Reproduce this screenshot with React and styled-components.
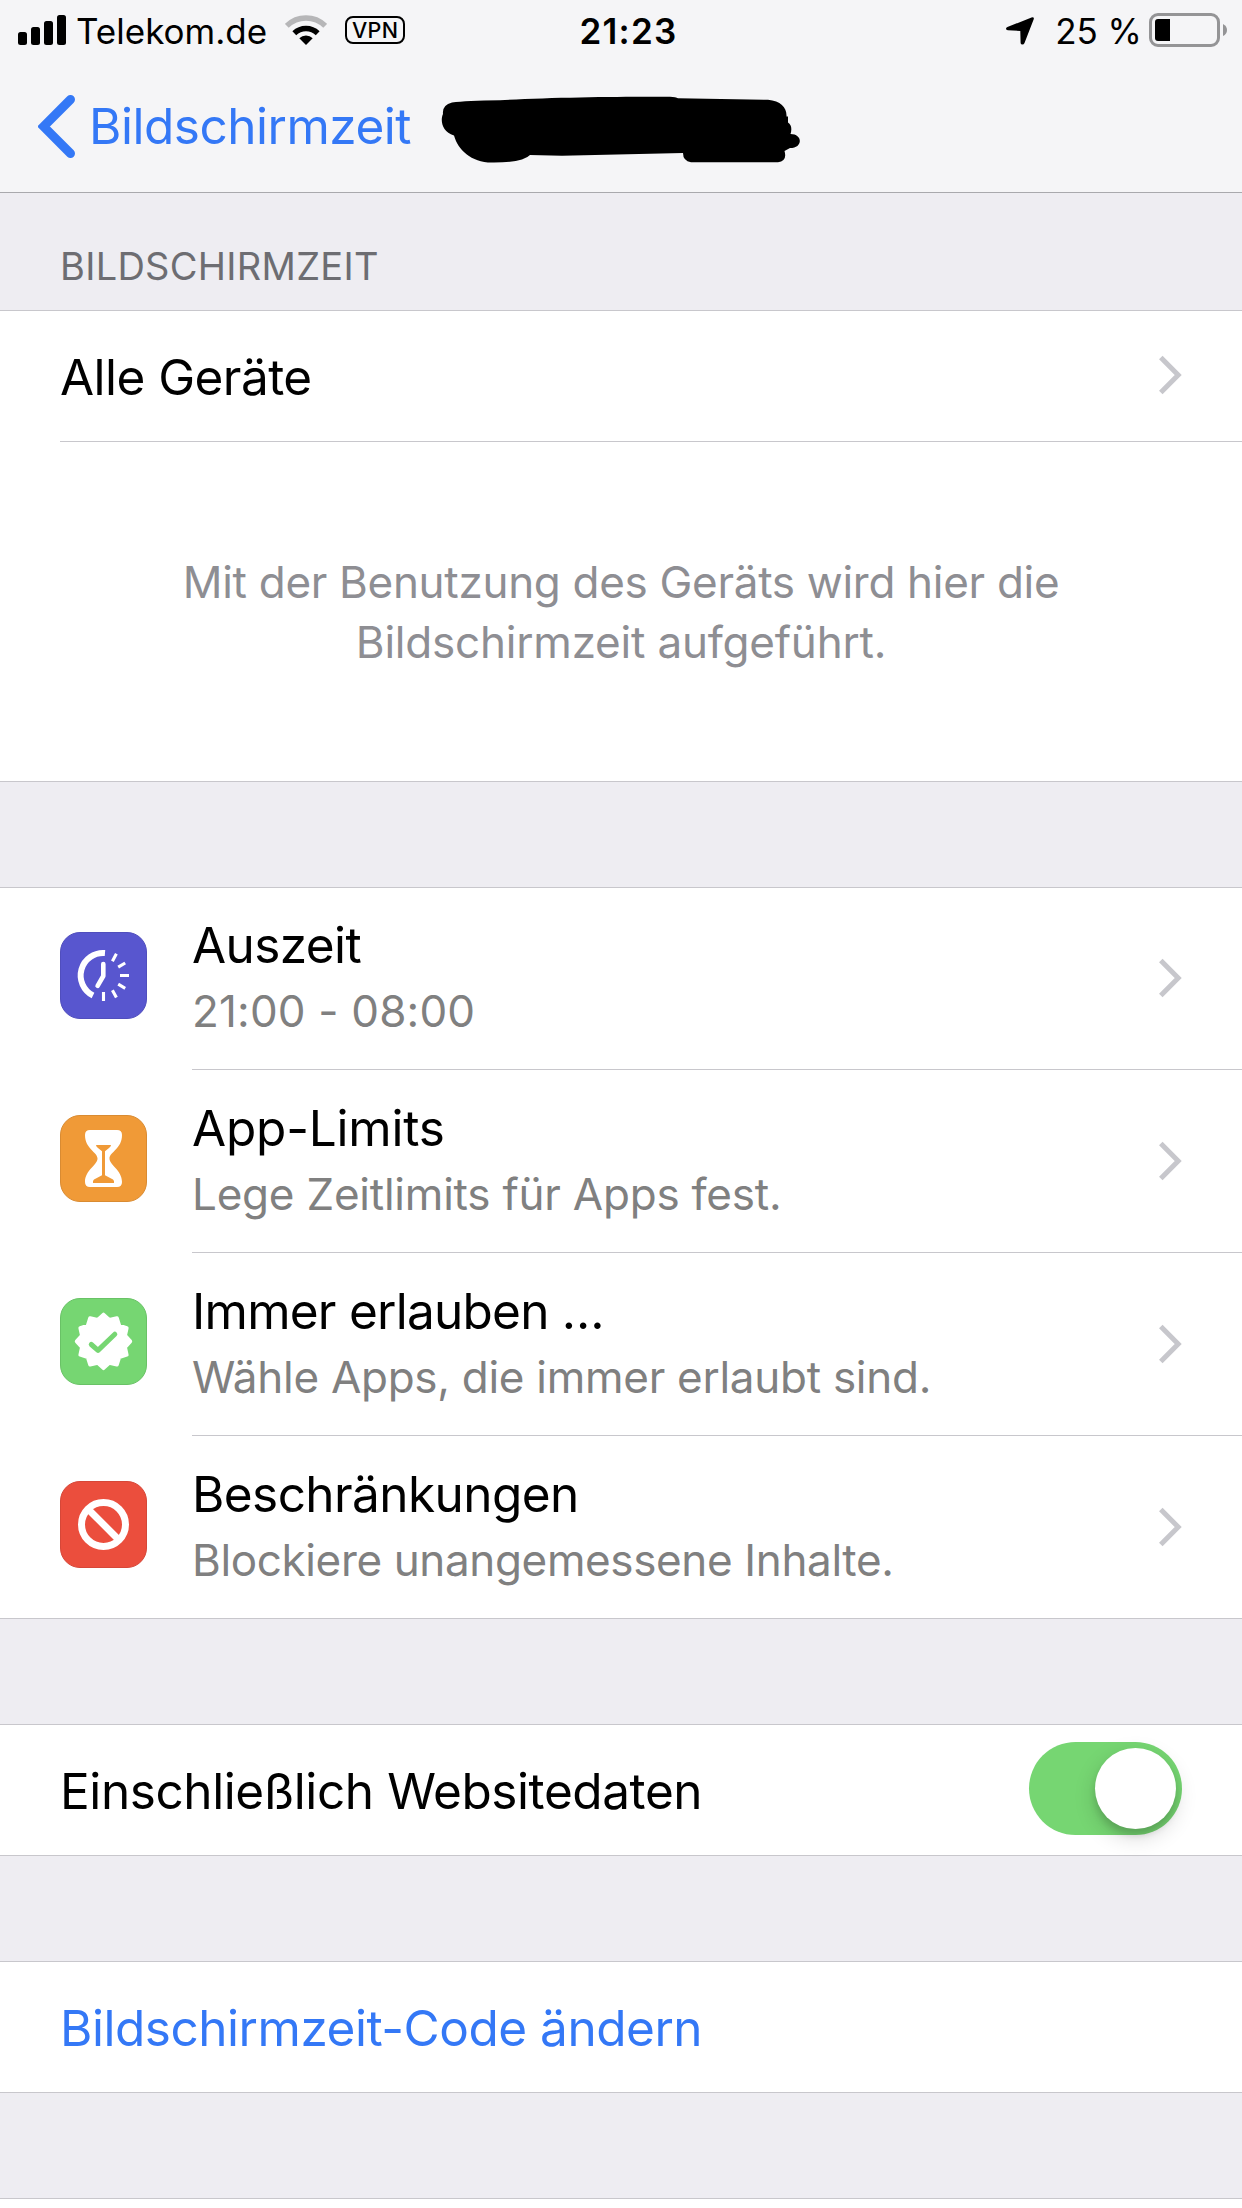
import React from "react";
import styled, { createGlobalStyle } from "styled-components";

const Global = createGlobalStyle`
  * { box-sizing: border-box; }
  body { margin: 0; background: #eeedf2; font-family: Inter, "Liberation Sans", sans-serif; }
`;

const Page = styled.div`
  width: 1242px;
  height: 2208px;
  overflow: hidden;
  display: flex;
  flex-direction: column;
  background: #eeedf2;
`;

const Header = styled.header`
  height: 193px;
  flex: none;
  background: #f5f5f7;
  border-bottom: 1px solid #a9a9ad;
`;

const StatusBar = styled.div`
  height: 60px;
  display: grid;
  grid-template-columns: 1fr auto 1fr;
  padding: 0 15px 0 18px;
`;

const StatusGroup = styled.div`
  display: flex;
  align-items: flex-start;
  justify-content: ${(p) => (p.$end ? "flex-end" : "flex-start")};
`;

const Label = styled.span`
  display: block;
  white-space: nowrap;
  font-size: ${(p) => p.$size}px;
  line-height: ${(p) => p.$line || 60}px;
  font-weight: ${(p) => p.$weight || 400};
  letter-spacing: ${(p) => p.$track || 0}px;
  color: ${(p) => p.$color || "#000"};
  margin: ${(p) => p.$margin || 0};
`;

const Glyph = styled.svg`
  display: block;
  flex: none;
  margin: ${(p) => p.$margin || 0};
`;

const VpnBadge = styled.div`
  width: 60px;
  height: 28px;
  margin: 16px 0 0 18px;
  border: 2px solid #000;
  border-radius: 8px;
  display: flex;
  align-items: center;
  justify-content: center;
`;

const NavBar = styled.nav`
  height: 132px;
  display: flex;
  align-items: flex-start;
  padding-left: 38px;
`;

const SectionTitle = styled.div`
  height: 117px;
  flex: none;
  padding: 42px 0 0 60px;
`;

const Group = styled.section`
  flex: none;
  background: #fff;
  border-top: 1px solid #c8c7cc;
  border-bottom: 1px solid #c8c7cc;
  margin-bottom: ${(p) => p.$gap || 0}px;
`;

const FeatureGroup = styled(Group)`
  border-top: 0;
  box-shadow: inset 0 1px #c8c7cc;
`;

const Row = styled.div`
  height: 130px;
  display: flex;
  align-items: center;
  justify-content: space-between;
  padding: 0 60px;
`;

const Divider = styled.div`
  height: 1px;
  margin-left: ${(p) => p.$inset}px;
  background: #c8c7cc;
`;

const Empty = styled.div`
  height: 339px;
  padding-top: 110px;
  display: flex;
  flex-direction: column;
  align-items: center;
`;

const FeatureRow = styled.div`
  height: 182px;
  display: flex;
  align-items: flex-start;
  padding: 0 60px;
`;

const Texts = styled.div`
  flex: 1;
  padding: 28px 0 0 45px;
`;

const Switch = styled.div`
  width: 153px;
  height: 93px;
  border-radius: 47px;
  background: #76d672;
  display: flex;
  justify-content: flex-end;
  padding: 6px;
  margin-top: -3px;
`;

const Knob = styled.div`
  width: 81px;
  height: 81px;
  border-radius: 50%;
  background: #fff;
  box-shadow: 0 8px 22px rgba(0, 0, 0, 0.16), 0 6px 7px rgba(0, 0, 0, 0.13);
`;

const LastSection = styled.div`
  flex: 1;
  margin-top: 105px;
  background: #fff;
  border-top: 1px solid #c8c7cc;
`;

function Chevron({ margin }) {
  return (
    <Glyph width="25" height="40" viewBox="0 0 25 40" $margin={margin}>
      <path d="M2.8 2.5 20.2 20 2.8 37.5" fill="none" stroke="#c7c7cc" strokeWidth="5" />
    </Glyph>
  );
}

function Tile({ fill, edge, children }) {
  return (
    <Glyph width="87" height="87" viewBox="0 0 87 87" $margin="45px 0 0 0">
      <rect x="0.5" y="0.5" width="86" height="86" rx="19.5" fill={fill} stroke={edge} />
      {children}
    </Glyph>
  );
}

const DowntimeIcon = () => (
  <Tile fill="#5856cf" edge="#504ebd">
    <path d="M45 21A22.500 22.500 0 0 0 33 63.500" fill="none" stroke="#fff" strokeWidth="6" />
    <path d="M43.3 32V44L37.6 53.8" fill="none" stroke="#fff" strokeWidth="4.6" strokeLinecap="round" strokeLinejoin="round" />
    <path d="M52.4 29.2 56.4 21.8M58.2 35.2 65.2 31M60 43.5H69M58.2 52.2 65.2 56.4M52.4 58.2 56.4 65.6M43.5 60V69" stroke="#fff" strokeWidth="3.1" />
  </Tile>
);

const HourglassIcon = () => (
  <Tile fill="#f09a37" edge="#d98b32">
    <path
      d="M30 15H57Q62 15 62 20C62 34 49.500 37 49.500 43.500S62 55 62 67Q62 72 57 72H30Q25 72 25 67C25 55 37.500 50 37.500 43.500S25 34 25 20Q25 15 30 15Z"
      fill="#fff"
    />
    <path d="M36 30H51Q51 31.500 49 33L45 36.300V60.300L53 64.500Q54.500 65.500 54 68H33Q32.500 65.500 34 64.500L42 60.300V36.300L38 33Q36 31.500 36 30Z" fill="#f09a37" />
  </Tile>
);

const SEAL = Array.from({ length: 24 }, (_, i) => {
  const a = (i * Math.PI) / 12 - Math.PI / 2;
  const r = i % 2 ? 22.3 : 26.8;
  return `${(43.5 + r * Math.cos(a)).toFixed(2)},${(43.4 + r * Math.sin(a)).toFixed(2)}`;
}).join(" ");

const SealIcon = () => (
  <Tile fill="#76d672" edge="#69c266">
    <polygon points={SEAL} fill="#fff" stroke="#fff" strokeWidth="3.8" strokeLinejoin="round" />
    <path d="M31.300 46.500 38 52.400 54.800 36.200" fill="none" stroke="#76d672" strokeWidth="5" strokeLinecap="round" strokeLinejoin="round" />
  </Tile>
);

const BlockIcon = () => (
  <Tile fill="#eb4e3d" edge="#d64738">
    <circle cx="43.500" cy="43.500" r="22" fill="none" stroke="#fff" strokeWidth="7" />
    <path d="M28 28 59 59" stroke="#fff" strokeWidth="7" />
  </Tile>
);

const features = [
  { icon: DowntimeIcon, title: "Auszeit", tt: -0.6, sub: "21:00 - 08:00", st: 0.17 },
  { icon: HourglassIcon, title: "App-Limits", tt: -0.2, sub: "Lege Zeitlimits für Apps fest.", st: -0.22 },
  { icon: SealIcon, title: "Immer erlauben …", tt: -0.75, sub: "Wähle Apps, die immer erlaubt sind.", st: -0.27 },
  { icon: BlockIcon, title: "Beschränkungen", tt: -0.58, sub: "Blockiere unangemessene Inhalte.", st: -0.36 },
];

export default function App() {
  return (
    <>
      <Global />
      <Page>
        <Header>
          <StatusBar>
            <StatusGroup>
              <Glyph width="48" height="30" viewBox="0 0 48 30" $margin="15px 0 0 0">
                <rect x="0" y="17" width="9" height="13" rx="2.500" />
                <rect x="13" y="12" width="9" height="18" rx="2.500" />
                <rect x="26" y="6" width="9" height="24" rx="2.500" />
                <rect x="39" y="0" width="9" height="30" rx="2.500" />
              </Glyph>
              <Label $size={35} $margin="1px 0 0 10px">Telekom.de</Label>
              <Glyph width="42" height="30" viewBox="0 0 42 30" $margin="15px 0 0 18px">
                <path d="M1.800 10.800A27.500 27.500 0 0 1 40.200 10.800" fill="none" stroke="#b6b6b8" strokeWidth="5.500" />
                <path d="M9.300 18.300A16.800 16.800 0 0 1 32.700 18.300" fill="none" stroke="#000" strokeWidth="5.500" />
                <path d="M21 30 14.300 23.300A9.500 9.500 0 0 1 27.700 23.300Z" />
              </Glyph>
              <VpnBadge>
                <Label $size={21.5} $line={24} $weight={500} $track={0.3}>VPN</Label>
              </VpnBadge>
            </StatusGroup>
            <Label $size={35} $weight={600} $track={1.2} $margin="1px 0 0 12px">21:23</Label>
            <StatusGroup $end>
              <Glyph width="28" height="28" viewBox="0 0 28 28" $margin="17px 21px 0 0">
                <path d="M26.500.2Q28.200.2 27.800 2L18.500 26Q17.800 27.800 16 27.600 14.600 27.300 14.600 25.700L14.300 14 1.800 13.300Q0 13.200 0 11.800 0 10.700 1.400 10.100L25.500.4Z" />
              </Glyph>
              <Label $size={35} $margin="1px 7px 0 0">25 %</Label>
              <Glyph width="78" height="34" viewBox="0 0 78 34" $margin="13px 0 0 0">
                <rect x="1.500" y="1.500" width="68" height="31" rx="7.500" fill="none" stroke="#949496" strokeWidth="3" />
                <path d="M74 11Q78 13 78 17T74 23Z" fill="#949496" />
                <path d="M9 6H21V28H9Q6 28 6 25V9Q6 6 9 6Z" />
              </Glyph>
            </StatusGroup>
          </StatusBar>
          <NavBar>
            <Glyph width="38" height="64" viewBox="0 0 38 64" $margin="35px 0 0 0">
              <path d="M32.500 4.500 5.500 31.500 32.500 58.500" fill="none" stroke="#3478f6" strokeWidth="9" strokeLinecap="round" />
            </Glyph>
            <Label $size={49.5} $track={-0.48} $color="#3478f6" $margin="36px 0 0 13px">Bildschirmzeit</Label>
            <Glyph width="360" height="68" viewBox="0 0 360 68" $margin="36px 0 0 29px">
              <path d="M12 6.500Q26 4.700 60 4.300C110 1 190 .4 230 .7Q236 .8 238 2.200L328 3.800C341 5 347 12 346.500 20.500H348V26.500Q353 30 350.500 38C363 38 363 52 350 52L344.500 55Q347.500 65 338 66.200H251Q243 65 243 57L122 59.800 90 59Q83 66.500 54 66.500C32 67.500 18 54 14 39.500C2 36 0 24 3 18Q2 9 12 6.500Z" />
            </Glyph>
          </NavBar>
        </Header>

        <SectionTitle>
          <Label $size={38} $track={0.28} $color="#6d6d72" $margin="1px 0 0 0">BILDSCHIRMZEIT</Label>
        </SectionTitle>

        <Group $gap={105}>
          <Row>
            <Label $size={49.5} $track={-0.55} $margin="2px 0 0 0">Alle Geräte</Label>
            <Chevron margin="0 -1px 3px 0" />
          </Row>
          <Divider $inset={60} />
          <Empty>
            <Label $size={44} $track={-0.3} $color="#8e8e93">Mit der Benutzung des Geräts wird hier die</Label>
            <Label $size={44} $track={-0.2} $color="#8e8e93">Bildschirmzeit aufgeführt.</Label>
          </Empty>
        </Group>

        <FeatureGroup $gap={105}>
          {features.map(({ icon: Icon, title, tt, sub, st }, i) => (
            <React.Fragment key={title}>
              {i > 0 && <Divider $inset={192} />}
              <FeatureRow>
                <Icon />
                <Texts>
                  <Label $size={49.5} $track={tt}>{title}</Label>
                  <Label $size={44} $track={st} $color="#808080" $line={72}>{sub}</Label>
                </Texts>
                <Chevron margin="71px -1px 0 0" />
              </FeatureRow>
            </React.Fragment>
          ))}
        </FeatureGroup>

        <Group $gap={105}>
          <Row>
            <Label $size={49.5} $track={-0.42} $margin="2px 0 0 0">Einschließlich Websitedaten</Label>
            <Switch>
              <Knob />
            </Switch>
          </Row>
        </Group>

        <Group>
          <Row>
            <Label $size={49.5} $track={-0.47} $color="#3478f6" $margin="2px 0 0 0">Bildschirmzeit-Code ändern</Label>
          </Row>
        </Group>
        <LastSection />
      </Page>
    </>
  );
}
